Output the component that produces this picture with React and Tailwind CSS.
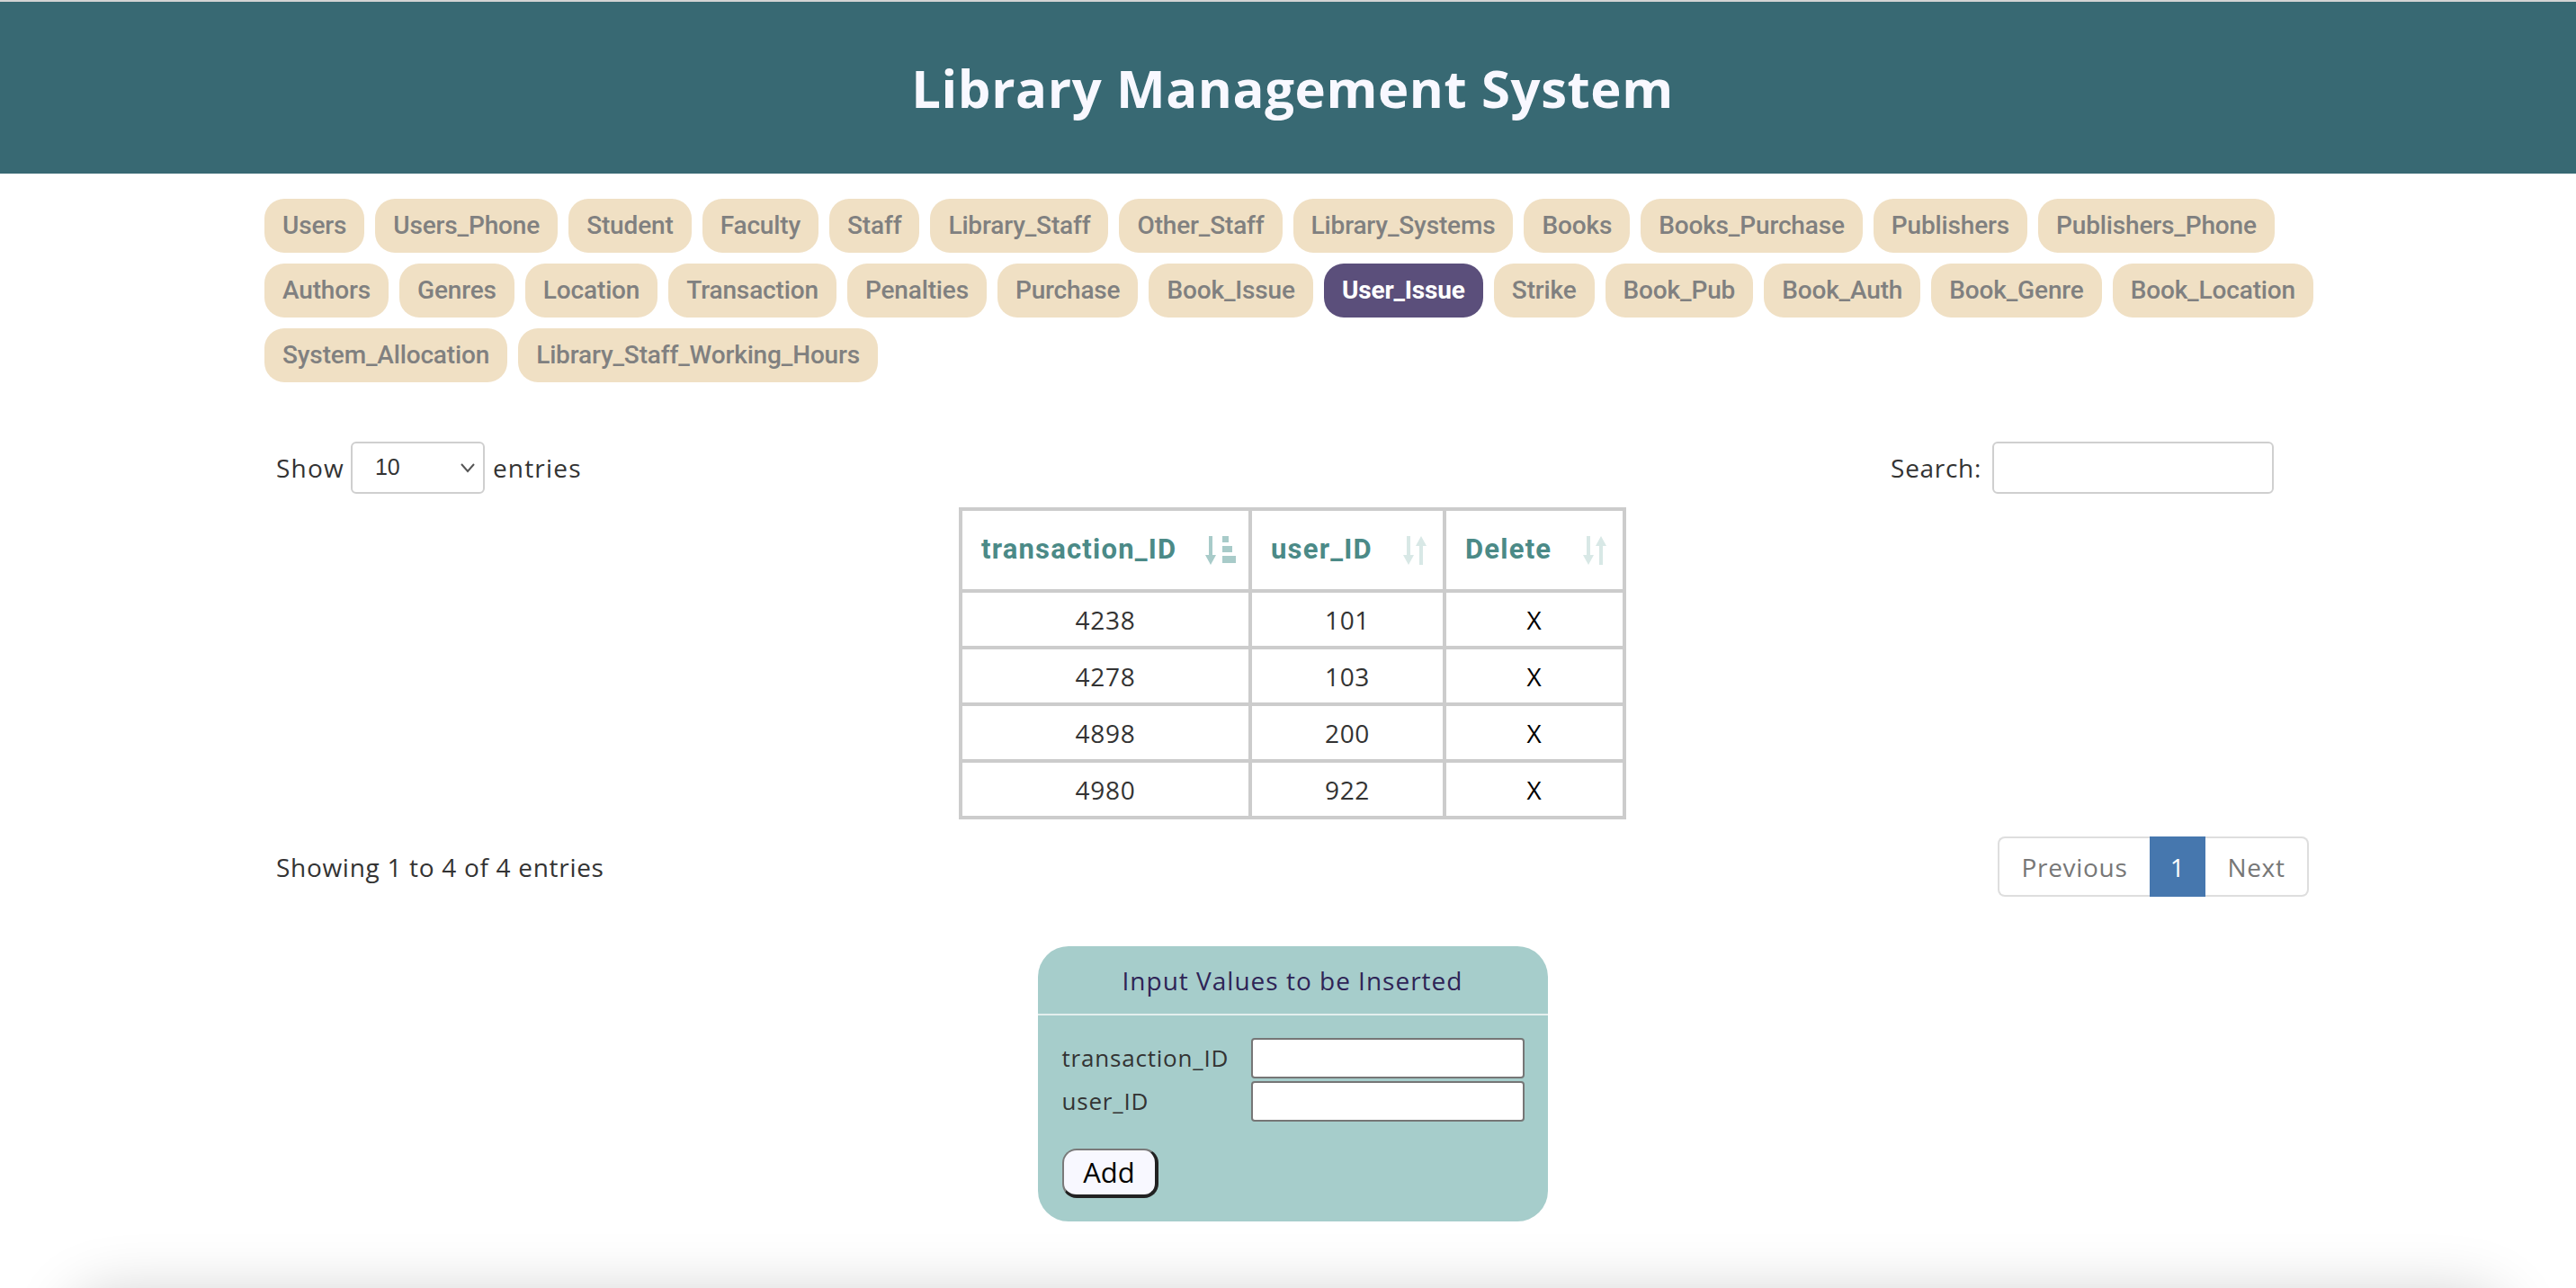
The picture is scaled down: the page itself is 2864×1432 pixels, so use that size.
import React from "react";

const rows = [
  ["Users", "Users_Phone", "Student", "Faculty", "Staff", "Library_Staff", "Other_Staff", "Library_Systems", "Books", "Books_Purchase", "Publishers", "Publishers_Phone"],
  ["Authors", "Genres", "Location", "Transaction", "Penalties", "Purchase", "Book_Issue", "User_Issue", "Strike", "Book_Pub", "Book_Auth", "Book_Genre", "Book_Location"],
  ["System_Allocation", "Library_Staff_Working_Hours"],
];

const data = [
  ["4238", "101"],
  ["4278", "103"],
  ["4898", "200"],
  ["4980", "922"],
];

function SortAsc() {
  return (
    <svg width="34" height="34" viewBox="0 0 34 34" className="shrink-0">
      <g fill="#a8cbc9">
        <rect x="4" y="1" width="4" height="23" />
        <polygon points="0,22 12,22 6,33" />
        <rect x="19" y="1" width="7" height="7" />
        <rect x="19" y="12" width="11" height="7" />
        <rect x="19" y="23" width="15" height="8" />
      </g>
    </svg>
  );
}

function SortBoth() {
  return (
    <svg width="30" height="34" viewBox="0 0 30 34" className="shrink-0">
      <g fill="#d8e8e6">
        <rect x="4" y="1" width="4" height="23" />
        <polygon points="0,22 12,22 6,33" />
        <polygon points="14,12 26,12 20,1" />
        <rect x="18" y="10" width="4" height="23" />
      </g>
    </svg>
  );
}

export default function App() {
  const body = "font-['Open_Sans',sans-serif]";
  return (
    <div className={`min-h-screen bg-white ${body}`}>
      <header className="h-[193px] border-t-2 border-[#d4d4d4] bg-[#386973] flex items-center justify-center pl-[10px]">
        <h1 className="font-['Open_Sans',sans-serif] font-bold text-[58px] text-[#f8f8ff] tracking-[0.6px] leading-none">
          Library Management System
        </h1>
      </header>

      <nav className="mt-[28px] ml-[294px] w-[2300px] flex flex-col gap-[12px]">
        {rows.map((row, i) => (
          <div key={i} className="flex gap-[12px]">
            {row.map((t) => {
              const active = t === "User_Issue";
              return (
                <div
                  key={t}
                  className={
                    "h-[60px] px-[20px] rounded-[22px] flex items-center font-['Roboto',sans-serif] text-[28px] tracking-[-0.15px] whitespace-nowrap " +
                    (active ? "bg-[#5b4f7b] text-white font-bold" : "bg-[#f0e0c4] text-[#808080] font-medium")
                  }
                >
                  {t}
                </div>
              );
            })}
          </div>
        ))}
      </nav>

      <main className="mt-[66px] ml-[307px] w-[2260px] text-[#333] text-[28px] tracking-[0.7px]">
        <div className="flex items-center justify-between h-[58px]">
          <div className="flex items-center">
            <span className="tracking-[1.2px]">Show</span>
            <div className="ml-[7px] w-[149px] h-[58px] border-2 border-[#cfcfcf] rounded-[6px] flex items-center justify-between pl-[25px] pr-[8px]">
              <span className="text-[25px] font-['Liberation_Sans',sans-serif] tracking-normal">10</span>
              <svg width="18" height="12" viewBox="0 0 18 12">
                <polyline points="2,2 9,10 16,2" fill="none" stroke="#555" strokeWidth="2" />
              </svg>
            </div>
            <span className="ml-[9px] tracking-[1.2px]">entries</span>
          </div>
          <div className="flex items-center mr-[39px]">
            <span>Search:</span>
            <div className="ml-[12px] w-[313px] h-[58px] border-2 border-[#cfcfcf] rounded-[6px] bg-white" />
          </div>
        </div>

        <div className="mt-[15px] mx-auto w-fit border-t-4 border-l-4 border-[#cccccc]">
          <div className="grid grid-cols-[322px_216px_200px]">
            {[
              ["transaction_ID", <SortAsc key="a" />],
              ["user_ID", <SortBoth key="b" />],
              ["Delete", <SortBoth key="c" />],
            ].map(([label, icon]) => (
              <div
                key={label}
                className="h-[91px] border-r-4 border-b-4 border-[#cccccc] flex items-center justify-between pl-[21px] pr-[14px]"
              >
                <span className="font-['Roboto',sans-serif] font-bold text-[31px] text-[#4b8a87] tracking-[1.2px]">{label}</span>
                {icon}
              </div>
            ))}
            {data.map(([a, b]) => (
              <React.Fragment key={a}>
                <div className="h-[63px] border-r-4 border-b-4 border-[#cccccc] flex items-center justify-center">{a}</div>
                <div className="h-[63px] border-r-4 border-b-4 border-[#cccccc] flex items-center justify-center">{b}</div>
                <div className="h-[63px] border-r-4 border-b-4 border-[#cccccc] flex items-center justify-center text-black">X</div>
              </React.Fragment>
            ))}
          </div>
        </div>

        <div className="mt-[19px] flex items-center justify-between h-[67px]">
          <span>Showing 1 to 4 of 4 entries</span>
          <div className="flex h-[67px] text-[#777]">
            <div className="w-[169px] h-full border-2 border-r-0 border-[#dedede] rounded-l-[8px] flex items-center justify-center">Previous</div>
            <div className="w-[62px] h-full bg-[#4677ae] text-white flex items-center justify-center">1</div>
            <div className="w-[115px] h-full border-2 border-l-0 border-[#dedede] rounded-r-[8px] flex items-center justify-center">Next</div>
          </div>
        </div>

        <form className="mt-[55px] mx-auto w-[567px] h-[306px] rounded-[34px] bg-[#a6cdcb] flex flex-col">
          <div className="h-[75px] flex items-center justify-center text-[#2e2456] text-[28px] tracking-[1px]">
            Input Values to be Inserted
          </div>
          <div className="h-[2px] bg-[#e4efee]" />
          <div className="pl-[27px] pt-[25px] text-[#333] text-[26px] tracking-[0.8px]">
            <div className="flex items-center h-[45px]">
              <span className="w-[210px]">transaction_ID</span>
              <div className="w-[304px] h-[45px] bg-white border-2 border-[#767676] rounded-[4px]" />
            </div>
            <div className="flex items-center h-[45px] mt-[3px]">
              <span className="w-[210px]">user_ID</span>
              <div className="w-[304px] h-[45px] bg-white border-2 border-[#767676] rounded-[4px]" />
            </div>
            <button
              type="button"
              className="mt-[30px] w-[107px] h-[55px] rounded-[16px] bg-[#f8f8ff] border-t-2 border-l-2 border-r-[4px] border-b-[4px] border-t-[#7a7a7a] border-l-[#7a7a7a] border-r-[#222] border-b-[#222] text-black text-[31px] tracking-normal flex items-center justify-center"
            >
              Add
            </button>
          </div>
        </form>

        <div className="h-[4px]" />
      </main>

      <div className="mt-[78px] mx-[80px] h-[300px] rounded-[40px] bg-white shadow-[0_0_70px_rgba(0,0,0,0.2)]" />
    </div>
  );
}
